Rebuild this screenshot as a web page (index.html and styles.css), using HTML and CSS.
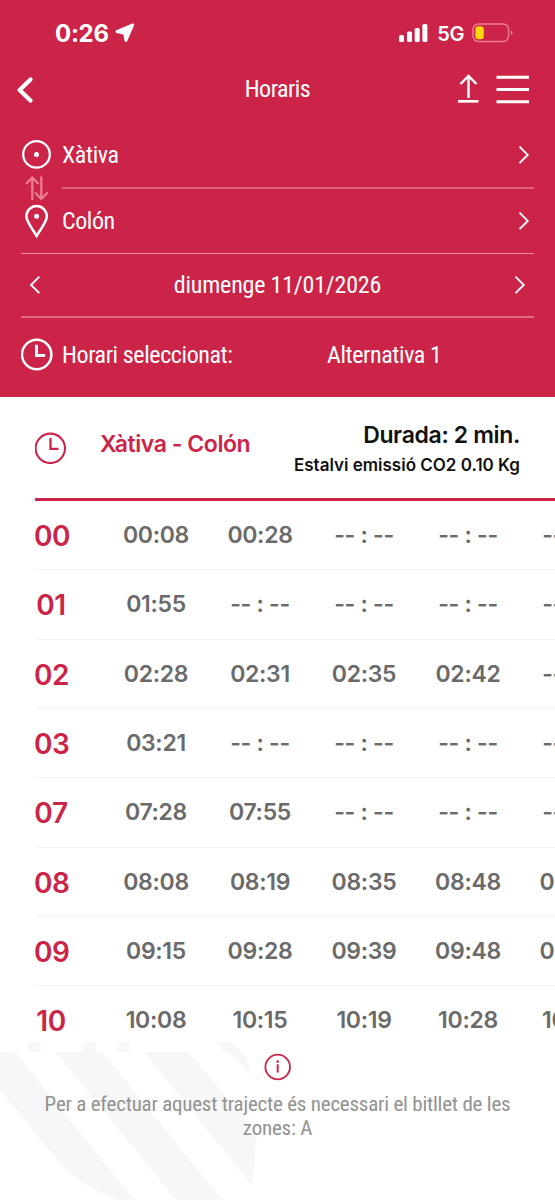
FILE: index.html
```html
<!DOCTYPE html>
<html lang="ca">
<head>
    <meta charset="UTF-8">
    <meta name="viewport" content="width=device-width, initial-scale=1.0">
    <title>Horaris</title>
    <link rel="stylesheet" href="styles.css">
</head>
<body>
    <header class="header">
        <div class="status-bar">
            <div class="status-left">
                <span class="clock">0:26</span>
                <svg width="20" height="20" viewBox="0 0 20 20"><path d="M17.800 1.800 L1.900 8.600 L9.500 10.300 L10.900 17.600 Z" fill="#fff" stroke="#fff" stroke-width="2.800" stroke-linejoin="round"/></svg>
            </div>
            <div class="status-right">
                <svg width="30" height="20" viewBox="0 0 30 20" fill="#fff"><rect x="0" y="12" width="5" height="7" rx="1.500"/><rect x="8" y="8.500" width="5" height="10.500" rx="1.500"/><rect x="15.700" y="5" width="5" height="14" rx="1.500"/><rect x="23.400" y="1" width="5" height="18" rx="1.500"/></svg>
                <span class="network">5G</span>
                <svg width="42" height="20" viewBox="0 0 42 20"><rect x="1" y="1" width="35.500" height="17.500" rx="5.500" fill="none" stroke="#ec7e92" stroke-width="1.400"/><rect x="3.300" y="3.300" width="8.500" height="13" rx="3.200" fill="#ffd60a"/><path d="M38.700 7.200 Q42.500 9.700 38.700 12.300 Z" fill="#e67e92"/></svg>
            </div>
        </div>
        <nav class="nav">
            <svg class="back" width="20" height="28" viewBox="0 0 20 28"><path d="M14.500 3.500 L3.600 14 L14.500 24.500" fill="none" stroke="#fff" stroke-width="4.300" stroke-linecap="round" stroke-linejoin="round"/></svg>
            <h1 class="title">Horaris</h1>
            <div class="actions">
                <svg width="22" height="30" viewBox="0 0 22 30" fill="none" stroke="#fff"><path d="M11.500 24 V2 M3.500 10 L11.500 2 L19.500 10" stroke-width="2.400"/><path d="M1 27.300 H21.500" stroke-width="2.700"/></svg>
                <svg width="33" height="30" viewBox="0 0 33 30"><path d="M0.500 3.300 H33 M0.500 15.500 H33 M0.500 27.700 H33" stroke="#fff" stroke-width="3"/></svg>
            </div>
        </nav>

        <div class="search">
            <div class="icons">
                <svg width="32" height="96" viewBox="0 0 32 96" fill="none" stroke="#fff">
                    <circle cx="15.500" cy="15.400" r="13.300" stroke-width="2.300"/>
                    <circle cx="15.500" cy="15.400" r="2.500" fill="#fff" stroke="none"/>
                    <path d="M11.300 61 V38.500 M5 45 L11.300 38.500 L17.600 45 M20.300 37.500 V60 M14 53.500 L20.300 60 L26.600 53.500" stroke="#ec8196" stroke-width="2.200"/>
                    <path d="M15.600 97 C11 89 5.400 83 5.400 77.300 A10.200 10.200 0 0 1 25.800 77.300 C25.800 83 20.200 89 15.600 97 Z" stroke-width="2.500"/>
                    <circle cx="15.600" cy="77.300" r="2.500" fill="#fff" stroke="none"/>
                </svg>
            </div>
            <div class="stops">
                <div class="stop">
                    <span>Xàtiva</span>
                    <svg class="chevron" width="12" height="20" viewBox="0 0 12 20"><path d="M1.500 1.700 L9.700 9.900 L1.500 18.100"/></svg>
                </div>
                <div class="stop">
                    <span>Colón</span>
                    <svg class="chevron" width="12" height="20" viewBox="0 0 12 20"><path d="M1.500 1.700 L9.700 9.900 L1.500 18.100"/></svg>
                </div>
            </div>
        </div>
        <div class="date">
            <svg class="chevron" width="12" height="20" viewBox="0 0 12 20"><path d="M10.300 1.700 L2.100 9.900 L10.300 18.100"/></svg>
            <span>diumenge 11/01/2026</span>
            <svg class="chevron" width="12" height="20" viewBox="0 0 12 20"><path d="M1.500 1.700 L9.700 9.900 L1.500 18.100"/></svg>
        </div>
        <div class="selected">
            <svg width="32" height="34" viewBox="0 0 32 34" fill="none" stroke="#fff"><circle cx="15.700" cy="16.500" r="14.700" stroke-width="2.500"/><path d="M15.500 6.700 V17.500 H24.200" stroke-width="2.900"/></svg>
            <span class="selected-label">Horari seleccionat:</span>
            <span>Alternativa 1</span>
        </div>
    </header>

    <main class="timetable">
        <div class="route">
            <svg width="32" height="32" viewBox="0 0 32 32" fill="none" stroke="#cc2448"><circle cx="15.300" cy="16.300" r="14.700" stroke-width="2.100"/><path d="M15.500 6.100 V16.800 H23.500" stroke-width="2.300"/></svg>
            <h2 class="route-name">Xàtiva - Colón</h2>
            <div class="route-info">
                <div class="duration">Durada: 2 min.</div>
                <div class="saving">Estalvi emissió CO2 0.10 Kg</div>
            </div>
        </div>
        <div class="rows">
            <div class="row"><b>00</b><span>00:08</span><span>00:28</span><i>-- : --</i><i>-- : --</i><i>-- : --</i></div>
            <div class="row"><b>01</b><span>01:55</span><i>-- : --</i><i>-- : --</i><i>-- : --</i><i>-- : --</i></div>
            <div class="row"><b>02</b><span>02:28</span><span>02:31</span><span>02:35</span><span>02:42</span><i>-- : --</i></div>
            <div class="row"><b>03</b><span>03:21</span><i>-- : --</i><i>-- : --</i><i>-- : --</i><i>-- : --</i></div>
            <div class="row"><b>07</b><span>07:28</span><span>07:55</span><i>-- : --</i><i>-- : --</i><i>-- : --</i></div>
            <div class="row"><b>08</b><span>08:08</span><span>08:19</span><span>08:35</span><span>08:48</span><span>08:58</span></div>
            <div class="row"><b>09</b><span>09:15</span><span>09:28</span><span>09:39</span><span>09:48</span><span>09:58</span></div>
            <div class="row"><b>10</b><span>10:08</span><span>10:15</span><span>10:19</span><span>10:28</span><span>10:35</span></div>
        </div>
    </main>

    <footer class="footer">
        <!-- faded logo behind the note -->
        <svg class="watermark" width="278" height="160" viewBox="0 0 278 160" fill="#f7f7f7">
            <path d="M28 1 H40.500 V11 H28 Z M83 1 H96 V11 H83 Z M117 1 H129.500 V11 H117 Z"/>
            <path d="M0 11 H15 L135 160 H123 Q77 147 50 110 L0 49 Z"/>
            <path d="M56 11 H102 L223 160 H177 Z"/>
            <path d="M144 11 H188 L257 92 L252 144 Z"/>
            <path d="M216 1 H232 Q237 8 242 11 Q248 16 250 34 L233 14 L224 11 Z"/>
        </svg>
        <svg class="info" width="28" height="28" viewBox="0 0 28 28"><circle cx="13.700" cy="14" r="12.300" fill="#fff" stroke="#cc2448" stroke-width="1.800"/><path d="M13.700 11.300 V19.500" stroke="#cc2448" stroke-width="2"/><circle cx="13.700" cy="8.600" r="1.300" fill="#cc2448"/></svg>
        <p class="note">
            <span>Per a efectuar aquest trajecte és necessari el bitllet de les</span>
            <span>zones: A</span>
        </p>
    </footer>
</body>
</html>
```

FILE: styles.css
```css
* {
    box-sizing: border-box;
}

body {
    margin: 0;
    height: 1200px;
    display: flex;
    flex-direction: column;
    overflow: hidden;
    background-color: #fff;
    font-family: Inter, sans-serif;
}

svg {
    display: block;
    flex-shrink: 0;
}

.header {
    height: 397px;
    flex-shrink: 0;
    background-color: #cc2448;
    color: #fff;
    font-family: "Roboto Condensed", Roboto, sans-serif;
    font-stretch: condensed;
    font-size: 24px;
    letter-spacing: -0.4px;
    white-space: nowrap;
}

.status-bar {
    height: 66px;
    padding: 0 41px 0 55px;
    display: flex;
    align-items: center;
    justify-content: space-between;
    font-family: Inter, sans-serif;
    font-stretch: normal;
    letter-spacing: 0;
}

.status-left,
.status-right {
    display: flex;
    align-items: center;
}

.status-left {
    gap: 6px;
}

.clock {
    font-size: 24px;
    font-weight: 700;
    letter-spacing: -0.3px;
}

.network {
    font-size: 20px;
    font-weight: 600;
    letter-spacing: -0.4px;
    margin: 1px 8px 0 8px;
}

.nav {
    height: 46px;
    padding: 0 26px;
    display: grid;
    grid-template-columns: 1fr auto 1fr;
    align-items: center;
}

.back {
    margin: 1px 0 0 -10px;
}

.title {
    margin: 0;
    font-size: 24px;
    font-weight: 400;
    letter-spacing: -0.5px;
}

.actions {
    display: flex;
    justify-content: flex-end;
    gap: 17px;
}

.search {
    margin: 10px 21px 0 21px;
    height: 132px;
    display: flex;
    border-bottom: 1px solid #eb8a9e;
}

.icons {
    width: 41px;
    padding-top: 17px;
}

.icons svg {
    overflow: visible;
}

.stops {
    flex: 1;
}

.stop {
    height: 67px;
    padding-right: 4px;
    display: flex;
    align-items: center;
    justify-content: space-between;
}

.stop:first-child {
    border-bottom: 2px solid #e0607c;
}

.stop:last-child {
    height: 63px;
}

.chevron path {
    fill: none;
    stroke: #fff;
    stroke-width: 1.9;
}

.date {
    height: 64px;
    margin: 0 21px;
    padding: 0 8px;
    display: flex;
    align-items: center;
    justify-content: space-between;
    border-bottom: 2px solid #df6a83;
    letter-spacing: -0.2px;
}

.selected {
    height: 74px;
    padding: 0 21px;
    display: flex;
    align-items: center;
}

.selected-label {
    width: 265px;
    margin-left: 9px;
}

.timetable {
    height: 644px;
    flex-shrink: 0;
    padding-left: 35px;
    overflow: hidden;
}

.route {
    height: 104px;
    padding-right: 35px;
    display: flex;
    align-items: center;
    border-bottom: 3px solid #cc2448;
}

.route-name {
    margin: 0 0 8px 33px;
    color: #cc2448;
    font-size: 23px;
    font-weight: 600;
    letter-spacing: -0.45px;
    white-space: nowrap;
}

.route-info {
    margin: 4px 0 0 auto;
    color: #111;
    text-align: right;
    font-weight: 600;
    white-space: nowrap;
}

.duration {
    font-size: 23px;
    line-height: 30px;
    letter-spacing: -0.35px;
}

.saving {
    font-size: 17px;
    line-height: 30px;
    letter-spacing: 0;
}

.rows {
    width: 590px;
}

.row {
    height: 69.33px;
    display: grid;
    grid-template-columns: 69px repeat(5, 104px);
    align-items: center;
    border-bottom: 1px solid #f3f3f3;
    color: #6a6a6a;
    font-size: 23px;
    font-weight: 600;
    letter-spacing: -0.3px;
    text-align: center;
}

.row b {
    width: 34px;
    margin: 2px 0 0 -1px;
    color: #cc2448;
    font-size: 28px;
    font-weight: 600;
    letter-spacing: -0.4px;
}

.row i {
    font-style: normal;
}

.footer {
    flex: 1;
    position: relative;
    padding-top: 12px;
    display: flex;
    flex-direction: column;
    align-items: center;
}

.watermark {
    position: absolute;
    left: 0;
    top: 0;
}

.info {
    position: relative;
}

.note {
    position: relative;
    margin: 11px 0 0 0;
    display: flex;
    flex-direction: column;
    align-items: center;
    color: #929292;
    font-family: "Roboto Condensed", Roboto, sans-serif;
    font-stretch: condensed;
    font-size: 21px;
    line-height: 24px;
    letter-spacing: -0.22px;
    white-space: nowrap;
}
```
